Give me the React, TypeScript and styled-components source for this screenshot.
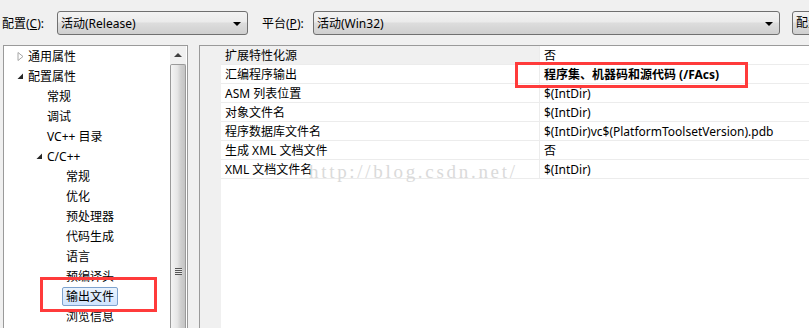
import React from 'react';
import styled, { createGlobalStyle } from 'styled-components';

const GlobalStyle = createGlobalStyle`
  html, body {
    margin: 0;
    padding: 0;
    background: #f0f0f0;
  }
`;

const Page = styled.div`
  position: relative;
  width: 809px;
  height: 328px;
  overflow: hidden;
  background: #f0f0f0;
  font-family: "Noto Sans", "Noto Sans CJK SC", sans-serif;
  font-size: 12px;
  color: #000;
`;

const Toolbar = styled.div`
  display: flex;
  align-items: center;
  height: 24px;
  padding: 11px 0 10px 2px;
  white-space: nowrap;
`;

const Label = styled.span<{ width: number }>`
  flex-shrink: 0;
  width: ${(p) => p.width}px;
`;

const Combo = styled.div<{ width: number; gap: number }>`
  box-sizing: border-box;
  display: flex;
  align-items: center;
  justify-content: space-between;
  flex-shrink: 0;
  width: ${(p) => p.width}px;
  height: 24px;
  margin-right: ${(p) => p.gap}px;
  padding: 0 6px 0 3px;
  border: 1px solid #707070;
  border-radius: 3px;
  background: linear-gradient(#f3f3f3, #ebebeb 45%, #dddddd 50%, #cfcfcf);
`;

const Arrow = styled.span`
  width: 0;
  height: 0;
  border-left: 4px solid transparent;
  border-right: 4px solid transparent;
  border-top: 4px solid #000;
  margin-top: 2px;
`;

const Button = styled.div`
  box-sizing: border-box;
  flex-shrink: 0;
  width: 60px;
  height: 24px;
  padding-left: 3px;
  line-height: 22px;
  border: 1px solid #707070;
  border-radius: 3px;
  background: linear-gradient(#f3f3f3, #ebebeb 45%, #dddddd 50%, #cfcfcf);
`;

const Body = styled.div`
  display: flex;
  align-items: flex-start;
  padding-left: 3px;
  gap: 11px;
`;

const TreePanel = styled.div`
  box-sizing: border-box;
  display: flex;
  flex-shrink: 0;
  width: 185px;
  height: 300px;
  border: 1px solid #9a9a9a;
  border-bottom: none;
  background: #fff;
`;

const TreeList = styled.div`
  flex: 1;
`;

const TreeRow = styled.div<{ level: number }>`
  display: flex;
  align-items: center;
  height: 20px;
  padding-left: ${(p) => 8 + p.level * 19}px;
  white-space: nowrap;
`;

const Expander = styled.span`
  display: flex;
  align-items: center;
  justify-content: center;
  width: 16px;
  height: 20px;
`;

const ItemText = styled.span<{ selected?: boolean }>`
  box-sizing: border-box;
  height: 19px;
  line-height: 17px;
  padding: 0 3px;
  margin-left: -4px;
  border: 1px solid ${(p) => (p.selected ? '#7da2ce' : 'transparent')};
  border-radius: 2px;
  background: ${(p) => (p.selected ? 'linear-gradient(#ebf4fe, #cfe4fe)' : 'transparent')};
`;

const ScrollBar = styled.div`
  display: flex;
  flex-direction: column;
  width: 16px;
  margin-right: 1px;
`;

const ScrollButton = styled.div`
  display: flex;
  align-items: center;
  justify-content: center;
  height: 18px;
  background: #f0f0f0;
`;

const UpArrow = styled.span`
  width: 0;
  height: 0;
  border-left: 4px solid transparent;
  border-right: 4px solid transparent;
  border-bottom: 4px solid #404040;
`;

const Thumb = styled.div`
  box-sizing: border-box;
  flex: 1;
  display: flex;
  align-items: flex-start;
  justify-content: center;
  padding-top: 203px;
  border: 1px solid #9a9a9a;
  border-bottom: none;
  border-radius: 2px 2px 0 0;
  background: linear-gradient(90deg, #f4f4f4, #e6e6e6 45%, #cfcfcf 70%, #c4c4c4);
`;

const Grip = styled.div`
  width: 7px;
  height: 7px;
  background: repeating-linear-gradient(#555 0 1px, #e8e8e8 1px 2px);
`;

const Grid = styled.div`
  box-sizing: border-box;
  flex: 1;
  min-width: 620px;
  height: 300px;
  border-top: 1px solid #9a9a9a;
  border-left: 1px solid #9a9a9a;
  background: #fff;
  background-image: linear-gradient(90deg, #f0f0f0 21px, transparent 21px);
`;

const GridRow = styled.div`
  display: grid;
  grid-template-columns: 21px 319px 1fr;
  height: 19px;
`;

const Cell = styled.div<{ shaded?: boolean; bold?: boolean; divider?: boolean }>`
  box-sizing: border-box;
  height: 19px;
  line-height: 20px;
  padding-left: 4px;
  white-space: nowrap;
  border-bottom: 1px solid #ececec;
  border-right: ${(p) => (p.divider ? '1px solid #ececec' : 'none')};
  background: ${(p) => (p.shaded ? '#f0f0f0' : '#fff')};
  font-weight: ${(p) => (p.bold ? 700 : 400)};
`;

const Gutter = styled.div`
  background: #f0f0f0;
`;

const Mark = styled.div<{ x: number; y: number; w: number; h: number }>`
  position: absolute;
  left: ${(p) => p.x}px;
  top: ${(p) => p.y}px;
  width: ${(p) => p.w}px;
  height: ${(p) => p.h}px;
  box-sizing: border-box;
  border: 3px solid #ff3b3b;
  pointer-events: none;
`;

const Watermark = styled.div`
  position: absolute;
  left: 309px;
  top: 161px;
  font-family: "Liberation Serif", serif;
  font-size: 19px;
  letter-spacing: 2.7px;
  color: #dadada;
  pointer-events: none;
`;

const Collapsed = () => (
  <svg width="7" height="9" viewBox="0 0 7 9">
    <path d="M1 0.5 L6 4.5 L1 8.5 Z" fill="#fff" stroke="#a6a6a6" />
  </svg>
);

const Open = () => (
  <svg width="7" height="7" viewBox="0 0 7 7">
    <path d="M6 0.5 L6 6 L0.5 6 Z" fill="#262626" />
  </svg>
);

type TreeItem = { label: string; level: number; expander?: 'open' | 'closed'; selected?: boolean };

const treeItems: TreeItem[] = [
  { label: '通用属性', level: 0, expander: 'closed' },
  { label: '配置属性', level: 0, expander: 'open' },
  { label: '常规', level: 1 },
  { label: '调试', level: 1 },
  { label: 'VC++ 目录', level: 1 },
  { label: 'C/C++', level: 1, expander: 'open' },
  { label: '常规', level: 2 },
  { label: '优化', level: 2 },
  { label: '预处理器', level: 2 },
  { label: '代码生成', level: 2 },
  { label: '语言', level: 2 },
  { label: '预编译头', level: 2 },
  { label: '输出文件', level: 2, selected: true },
  { label: '浏览信息', level: 2 },
];

const properties = [
  { name: '扩展特性化源', value: '否' },
  { name: '汇编程序输出', value: '程序集、机器码和源代码 (/FAcs)', bold: true },
  { name: 'ASM 列表位置', value: '$(IntDir)' },
  { name: '对象文件名', value: '$(IntDir)' },
  { name: '程序数据库文件名', value: '$(IntDir)vc$(PlatformToolsetVersion).pdb' },
  { name: '生成 XML 文档文件', value: '否' },
  { name: 'XML 文档文件名', value: '$(IntDir)' },
];

export default function App() {
  return (
    <Page>
      <GlobalStyle />
      <Toolbar>
        <Label width={55}>配置(<u>C</u>):</Label>
        <Combo width={191} gap={14}>
          <span>活动(Release)</span>
          <Arrow />
        </Combo>
        <Label width={51}>平台(<u>P</u>):</Label>
        <Combo width={467} gap={12}>
          <span>活动(Win32)</span>
          <Arrow />
        </Combo>
        <Button>配置管理器</Button>
      </Toolbar>
      <Body>
        <TreePanel>
          <TreeList>
            {treeItems.map((item, i) => (
              <TreeRow key={i} level={item.level}>
                <Expander>
                  {item.expander === 'closed' && <Collapsed />}
                  {item.expander === 'open' && <Open />}
                </Expander>
                <ItemText selected={item.selected}>{item.label}</ItemText>
              </TreeRow>
            ))}
          </TreeList>
          <ScrollBar>
            <ScrollButton>
              <UpArrow />
            </ScrollButton>
            <Thumb>
              <Grip />
            </Thumb>
          </ScrollBar>
        </TreePanel>
        <Grid>
          {properties.map((p, i) => (
            <GridRow key={i}>
              <Gutter />
              <Cell shaded={i === 0} divider>{p.name}</Cell>
              <Cell bold={p.bold}>{p.value}</Cell>
            </GridRow>
          ))}
        </Grid>
      </Body>
      <Watermark>http://blog.csdn.net/</Watermark>
      <Mark x={515} y={62} w={233} h={26} />
      <Mark x={40} y={277} w={117} h={35} />
    </Page>
  );
}
